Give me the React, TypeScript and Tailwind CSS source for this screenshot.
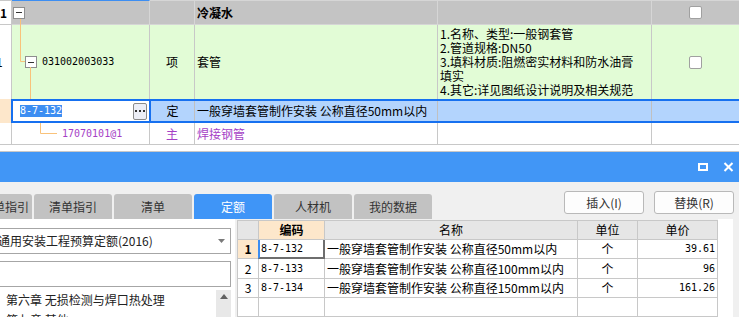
import React from "react";

const MONO = "font-['DejaVu_Sans_Mono',monospace] text-[10px]";
const LINE = "#c0c0c0";

function MinusBox() {
  return (
    <span className="inline-flex w-[12px] h-[12px] shrink-0 border border-[#8e8e8e] bg-white items-center justify-center">
      <span className="w-[6px] h-px bg-[#333]" />
    </span>
  );
}

function Check() {
  return <span className="w-[13px] h-[13px] border border-[#a0a0a0] rounded-[2px] bg-white" />;
}

function TopGrid() {
  return (
    <div className="relative shrink-0 flex flex-col">
      {/* row 1 */}
      <div className="flex h-[25px]">
        <div className="w-[12px] border-t border-b border-r border-[#c8c8c8] bg-white flex items-center font-bold">1</div>
        <div className="w-[138px] border-t border-t-[#3d8ef2] border-b border-r border-[#d6d6d6] bg-[#c4c4c4] flex items-center pl-[1px]">
          <MinusBox />
        </div>
        <div className="w-[45px] border-t border-b border-r border-[#d6d6d6] bg-[#c4c4c4]" />
        <div className="w-[243px] border-t border-b border-r border-[#d6d6d6] bg-[#c4c4c4] flex items-center pl-[2px] font-bold">冷凝水</div>
        <div className="w-[214px] border-t border-b border-r border-[#d6d6d6] bg-[#c4c4c4]" />
        <div className="flex-1 border-t border-b border-[#d6d6d6] bg-[#c4c4c4] flex items-center justify-center">
          <Check />
        </div>
      </div>
      {/* row 2 */}
      <div className="flex h-[74px] bg-[#e2fcd6]">
        <div className="w-[12px] border-r border-[#c8c8c8] bg-white flex items-center overflow-hidden">
          <span className="-ml-[4px]">1</span>
        </div>
        <div className="w-[138px] border-r border-[#c8c8c8] flex items-center pl-[13px]">
          <MinusBox />
          <span className={`${MONO} ml-[5px]`}>031002003033</span>
        </div>
        <div className="w-[45px] border-r border-[#c8c8c8] flex items-center justify-center">项</div>
        <div className="w-[243px] border-r border-[#c8c8c8] flex items-center pl-[2px]">套管</div>
        <div className="w-[214px] border-r border-[#c8c8c8] flex flex-col justify-center pl-[2px] leading-[14px]">
          <div>1.名称、类型:一般钢套管</div>
          <div>2.管道规格:DN50</div>
          <div>3.填料材质:阻燃密实材料和防水油膏</div>
          <div>填实</div>
          <div>4.其它:详见图纸设计说明及相关规范</div>
        </div>
        <div className="flex-1 flex items-center justify-center">
          <Check />
        </div>
      </div>
      {/* row 3 selected */}
      <div className="flex h-[24px]">
        <div className="w-[11px] bg-[#fde7cb]" />
        <div className="flex-1 flex border-y-2 border-[#1670f0] bg-[#b3d4fd]">
          <div className="w-[140px] border-x-2 border-[#1670f0] bg-white flex items-center pl-[7px] pr-[2px]">
            <span className={`${MONO} bg-[#3d8ef2] text-white leading-[12px] h-[12px] flex items-center`}>8-7-132</span>
            <span className="ml-auto w-[14px] h-[17px] border border-[#8a8a8a] rounded-[2px] bg-[#eceef6] flex items-center justify-center gap-[2px]">
              <span className="w-[2px] h-[2px] bg-[#333]" />
              <span className="w-[2px] h-[2px] bg-[#333]" />
              <span className="w-[2px] h-[2px] bg-[#333]" />
            </span>
          </div>
          <div className="w-[44px] border-r border-[#c0c0c0] flex items-center justify-center">定</div>
          <div className="w-[243px] border-r border-[#c0c0c0] flex items-center pl-[2px]">一般穿墙套管制作安装 公称直径50mm以内</div>
          <div className="w-[214px] border-r border-[#c0c0c0]" />
          <div className="flex-1" />
        </div>
      </div>
      {/* row 4 */}
      <div className="flex h-[22px] text-[#a53fc6]">
        <div className="w-[12px] border-r border-b border-[#c8c8c8]" />
        <div className="w-[138px] border-r border-b border-[#c8c8c8] flex items-center pl-[50px]">
          <span className={MONO}>17070101@1</span>
        </div>
        <div className="w-[45px] border-r border-b border-[#c8c8c8] flex items-center justify-center">主</div>
        <div className="w-[243px] border-r border-b border-[#c8c8c8] flex items-center pl-[2px]">焊接钢管</div>
        <div className="w-[214px] border-r border-b border-[#c8c8c8]" />
        <div className="flex-1 border-b border-[#c8c8c8]" />
      </div>
      {/* tree connector drawing */}
      <svg className="absolute left-0 top-0 pointer-events-none" width="80" height="145">
        <g stroke="#f9c27a" strokeWidth="1" fill="none">
          <path d="M20.5 19 V61.5 H25" />
          <path d="M30.5 67 V99" />
          <path d="M40.5 123 V133.5 H57" />
        </g>
      </svg>
    </div>
  );
}

function Tab({ label, active, className = "" }: { label: string; active?: boolean; className?: string }) {
  return (
    <div
      className={`w-[78px] h-[25px] rounded-t-[3px] flex items-center justify-center whitespace-nowrap overflow-hidden ${
        active ? "bg-[#3f95f7] text-white" : "bg-[#c2c2c2] text-[#333]"
      } ${className}`}
    >
      {label}
    </div>
  );
}

function Btn({ label }: { label: string }) {
  return (
    <div className="w-[80px] h-[23px] border border-[#b9b9b9] rounded-[3px] bg-[#fdfdfd] flex items-center justify-center text-[#333]">
      {label}
    </div>
  );
}

const rows = [
  { n: "1", code: "8-7-132", name: "一般穿墙套管制作安装 公称直径50mm以内", unit: "个", price: "39.61" },
  { n: "2", code: "8-7-133", name: "一般穿墙套管制作安装 公称直径100mm以内", unit: "个", price: "96" },
  { n: "3", code: "8-7-134", name: "一般穿墙套管制作安装 公称直径150mm以内", unit: "个", price: "161.26" },
];

function Table() {
  const cell = "border-r border-b border-[#c8c8c8] flex items-center";
  return (
    <div className="w-[481px] shrink-0 ml-[2px] mt-[1px] bg-white border-l border-t border-[#c8c8c8] flex flex-col">
      <div className="flex h-[23px] bg-[#e6e6e6]">
        <div className={`${cell} w-[21px]`} />
        <div className={`${cell} w-[66px] justify-center bg-[#fde7cb] font-bold`}>编码</div>
        <div className={`${cell} w-[253px] justify-center`}>名称</div>
        <div className={`${cell} w-[60px] justify-center`}>单位</div>
        <div className={`${cell} w-[80px] justify-center`}>单价</div>
      </div>
      {rows.map((r, i) => (
        <div key={r.n} className="flex h-[23px]">
          {i === 0 ? (
            <>
              <div className="w-[20px] border-b border-[#c8c8c8] bg-[#fde7cb] flex items-center justify-center font-bold">{r.n}</div>
              <div className="w-[67px] border-l-2 border-l-[#3d8ef2] border-r-2 border-r-[#6e6e6e] border-b-2 border-b-[#6e6e6e] flex items-center pl-[1px]">
                <span className={MONO}>{r.code}</span>
              </div>
            </>
          ) : (
            <>
              <div className={`${cell} w-[21px] justify-center`}>{r.n}</div>
              <div className={`${cell} w-[66px] pl-[2px]`}>
                <span className={MONO}>{r.code}</span>
              </div>
            </>
          )}
          <div className={`${cell} w-[253px] pl-[2px]`}>{r.name}</div>
          <div className={`${cell} w-[60px] justify-center`}>{r.unit}</div>
          <div className={`${cell} w-[80px] justify-end pr-[2px]`}>
            <span className={MONO}>{r.price}</span>
          </div>
        </div>
      ))}
      <div className="flex h-[23px]">
        <div className={`${cell} w-[21px]`} />
        <div className={`${cell} w-[66px]`} />
        <div className={`${cell} w-[253px]`} />
        <div className={`${cell} w-[60px]`} />
        <div className={`${cell} w-[80px]`} />
      </div>
    </div>
  );
}

export default function App() {
  return (
    <div className="w-[739px] h-[317px] overflow-hidden bg-white flex flex-col text-[12px] leading-none text-black font-['Noto_Sans_CJK_SC',sans-serif]">
      <TopGrid />
      <div className="h-[6px] shrink-0 bg-white" />
      {/* title bar */}
      <div className="h-[31px] shrink-0 border-t border-[#c8c8c8] bg-[#4196f6] flex items-center justify-end pr-[5px]">
        <svg width="10" height="8" viewBox="0 0 10 8">
          <rect x="1" y="1" width="8" height="6" fill="none" stroke="white" strokeWidth="2" />
        </svg>
        <svg className="ml-[15px]" width="11" height="10" viewBox="0 0 11 10">
          <path d="M1.5 1 L9.5 9 M9.5 1 L1.5 9" stroke="white" strokeWidth="2" />
        </svg>
      </div>
      {/* toolbar with tabs */}
      <div className="h-[37px] shrink-0 bg-[#f0f0f0] flex justify-between">
        <div className="flex gap-[2px] ml-[-46px] mt-[12px]">
          <div className="w-[78px] h-[25px] rounded-t-[3px] bg-[#c2c2c2] text-[#333] flex items-center justify-end pr-[3px] whitespace-nowrap overflow-hidden">
            清单指引
          </div>
          <Tab label="清单指引" />
          <Tab label="清单" />
          <Tab label="定额" active />
          <Tab label="人材机" />
          <Tab label="我的数据" />
        </div>
        <div className="flex gap-[10px] mt-[9px] pr-[5px]">
          <Btn label="插入(I)" />
          <Btn label="替换(R)" />
        </div>
      </div>
      {/* content */}
      <div className="flex-1 min-h-0 flex bg-[#f0f0f0]">
        <div className="w-[235px] shrink-0 bg-white overflow-hidden flex flex-col">
          <div className="ml-[-20px] mr-[4px] mt-[9px] h-[26px] shrink-0 border border-[#a6a6a6] flex items-center pl-[17px] text-[#222] whitespace-nowrap">
            <span>通用安装工程预算定额(2016)</span>
            <svg className="ml-auto mr-[5px]" width="7" height="4" viewBox="0 0 7 4">
              <path d="M0 0 H7 L3.5 4 Z" fill="#7a7a7a" />
            </svg>
          </div>
          <div className="ml-[-20px] mr-[4px] mt-[7px] h-[26px] shrink-0 border border-[#a6a6a6]" />
          <div className="flex mt-[3px] flex-1 mr-[4px]">
            <div className="flex-1 flex flex-col pl-[6px] text-[#222] whitespace-nowrap">
              <div className="h-[20px] flex items-center">第六章 无损检测与焊口热处理</div>
              <div className="h-[20px] flex items-center">第七章 其他</div>
            </div>
            <div className="w-[15px] bg-[#e8e8e8] flex justify-center pt-[4px]">
              <svg width="8" height="5" viewBox="0 0 8 5">
                <path d="M0 5 H8 L4 0 Z" fill="#606060" />
              </svg>
            </div>
          </div>
        </div>
        <Table />
        <div className="w-[15px] shrink-0 bg-white" />
        <div className="flex-1" />
      </div>
    </div>
  );
}
